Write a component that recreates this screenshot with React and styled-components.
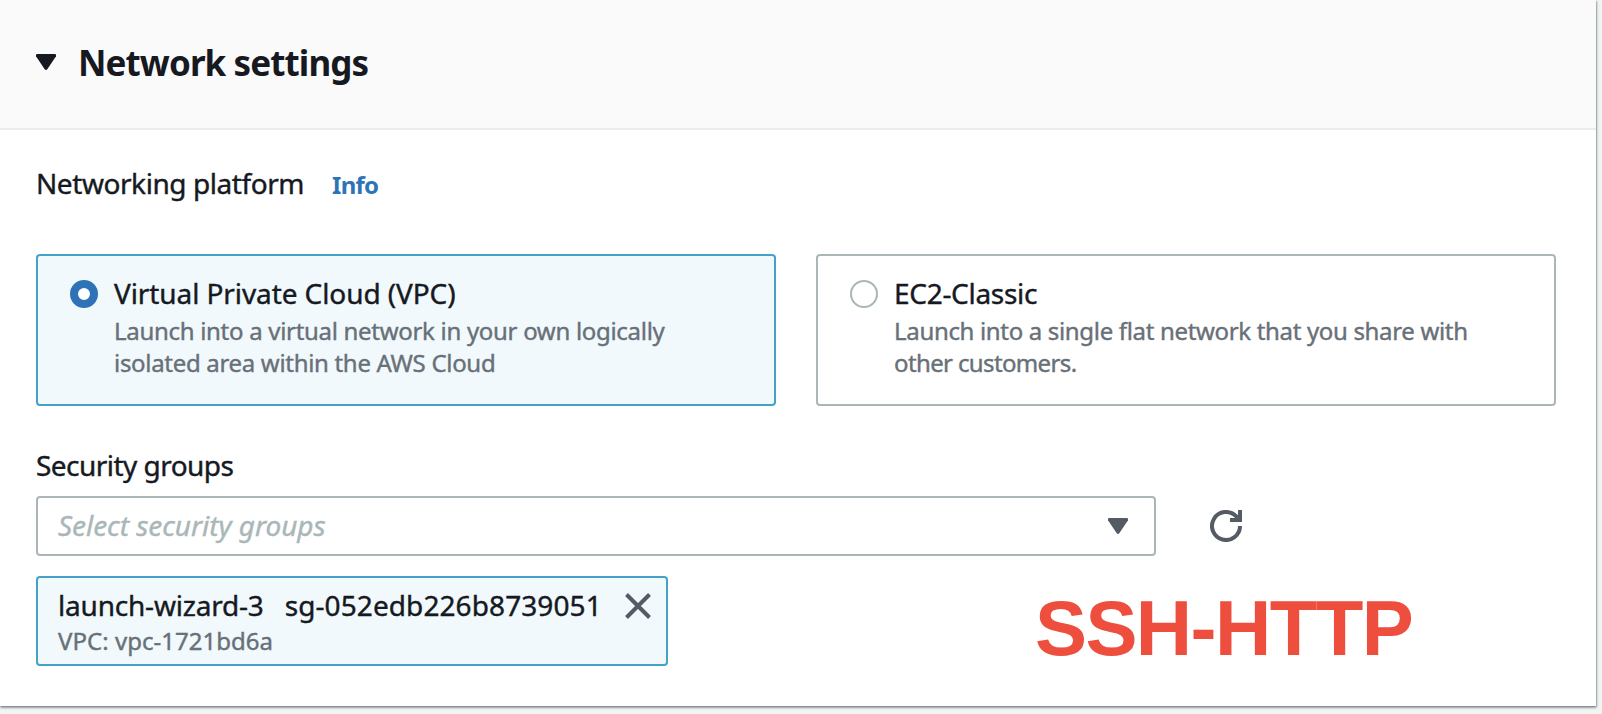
import React, { useState } from "react";
import styled, { createGlobalStyle } from "styled-components";

const color = {
  text: "#16191f",
  muted: "#687078",
  border: "#aab7b8",
  icon: "#545b64",
  accent: "#2e73b8",
  selectedBorder: "#44a1c8",
  selectedFill: "#f1f9fd",
  annotation: "#ee4e3e",
};

const GlobalStyle = createGlobalStyle`
  *, *::before, *::after { box-sizing: border-box; }
  body {
    margin: 0;
    background: #f2f3f3;
    color: ${color.text};
    font-family: "Noto Sans", "Open Sans", sans-serif;
    font-size: 28px;
    overflow: hidden;
  }
  h2, p { margin: 0; }
`;

const Page = styled.div`
  height: 714px;
`;

const Panel = styled.section`
  width: 1596px;
  height: 706px;
  background: #fff;
  box-shadow: 0 2px 2px 0 rgba(0, 28, 36, 0.3), 1px 1px 1px 0 rgba(0, 28, 36, 0.15),
    1px 1px 3px 0 rgba(0, 28, 36, 0.15);
`;

const Header = styled.header`
  display: flex;
  align-items: flex-start;
  gap: 22px;
  height: 130px;
  padding: 40px 36px 0;
  background: #fafafa;
  border-bottom: 2px solid #eaeded;
`;

const Caret = styled.svg`
  flex: none;
  width: 20px;
  height: 16px;
  margin-top: ${(p) => p.$top || 0}px;
  fill: ${(p) => p.$fill};
`;

const Title = styled.h2`
  font-size: 35px;
  line-height: 46px;
  font-weight: 700;
  letter-spacing: -0.9px;
`;

const Body = styled.div`
  padding: 31px 40px 0 36px;
`;

const Text = styled.span`
  letter-spacing: ${(p) => p.$track || 0}px;
  -webkit-text-stroke: 0.4px currentColor;
`;

const FieldHeading = styled.div`
  display: flex;
  align-items: baseline;
  gap: 28px;
  height: 44px;
  line-height: 44px;
`;

const InfoLink = styled.a`
  color: ${color.accent};
  font-size: 24px;
  font-weight: 700;
  letter-spacing: -0.8px;
`;

const Tiles = styled.div`
  display: grid;
  grid-template-columns: 740px 740px;
  gap: 40px;
  margin: 49px 0 37px;
`;

const Tile = styled.div`
  display: flex;
  gap: 16px;
  height: 152px;
  padding: 15px 32px 0;
  border: 2px solid ${(p) => (p.$selected ? color.selectedBorder : color.border)};
  border-radius: 4px;
  background: ${(p) => (p.$selected ? color.selectedFill : "#fff")};
  cursor: pointer;
`;

const Radio = styled.span`
  flex: none;
  width: 28px;
  height: 28px;
  margin-top: 9px;
  border-radius: 50%;
  background: #fff;
  border: ${(p) => (p.$selected ? `8px solid ${color.accent}` : `2px solid ${color.border}`)};
`;

const TileLabel = styled.div`
  line-height: 44px;
`;

const Description = styled.p`
  color: ${color.muted};
  font-size: 24px;
  line-height: 32px;
  white-space: nowrap;
`;

const SelectRow = styled.div`
  display: flex;
  align-items: center;
  gap: 54px;
  margin-top: 9px;
`;

const Select = styled.div`
  display: flex;
  align-items: center;
  justify-content: space-between;
  width: 1120px;
  height: 60px;
  padding: 0 26px 0 20px;
  border: 2px solid ${color.border};
  border-radius: 4px;
`;

const Placeholder = styled(Text)`
  color: ${color.border};
  font-style: italic;
  line-height: 40px;
  padding-bottom: 2px;
`;

const RefreshIcon = styled.svg`
  width: 32px;
  height: 32px;
  fill: none;
  stroke: ${color.icon};
  stroke-width: 4;
`;

const TokenRow = styled.div`
  display: flex;
  align-items: flex-start;
  margin-top: 20px;
`;

const Token = styled.div`
  display: flex;
  justify-content: space-between;
  width: 632px;
  height: 90px;
  padding: 7px 15px 0 20px;
  border: 2px solid ${color.selectedBorder};
  border-radius: 4px;
  background: ${color.selectedFill};
`;

const TokenLabel = styled.div`
  display: flex;
  gap: 21px;
  line-height: 40px;
`;

const CloseIcon = styled.svg`
  flex: none;
  width: 26px;
  height: 26px;
  margin-top: 8px;
  fill: none;
  stroke: ${color.icon};
  stroke-width: 4;
`;

const Annotation = styled.div`
  margin: 12px 0 0 367px;
  color: ${color.annotation};
  font-family: "Liberation Sans", Arial, sans-serif;
  font-size: 78px;
  font-weight: 700;
  font-kerning: none;
  line-height: 80px;
  letter-spacing: -1.6px;
`;

const DownCaret = (props) => (
  <Caret viewBox="0 0 20 16" {...props}>
    <path d="M1 0H19Q20 0 20 1V2.2L11.3 15.2Q10 16.8 8.7 15.2L0 2.2V1Q0 0 1 0Z" />
  </Caret>
);

const platforms = [
  {
    id: "vpc",
    label: ["Virtual Private Cloud (VPC)", -0.09],
    lines: [
      ["Launch into a virtual network in your own logically", -0.3],
      ["isolated area within the AWS Cloud", -0.31],
    ],
  },
  {
    id: "classic",
    label: ["EC2-Classic", -0.3],
    lines: [
      ["Launch into a single flat network that you share with", -0.33],
      ["other customers.", -0.63],
    ],
  },
];

export default function App() {
  const [platform, setPlatform] = useState("vpc");

  return (
    <Page>
      <GlobalStyle />
      <Panel>
        <Header>
          <DownCaret $top={14} $fill={color.text} />
          <Title>Network settings</Title>
        </Header>
        <Body>
          <FieldHeading>
            <Text $track={-0.43}>Networking platform</Text>
            <InfoLink>Info</InfoLink>
          </FieldHeading>
          <Tiles>
            {platforms.map(({ id, label, lines }) => (
              <Tile key={id} $selected={platform === id} onClick={() => setPlatform(id)}>
                <Radio $selected={platform === id} />
                <div>
                  <TileLabel>
                    <Text $track={label[1]}>{label[0]}</Text>
                  </TileLabel>
                  {lines.map(([line, track]) => (
                    <Description key={line}>
                      <Text $track={track}>{line}</Text>
                    </Description>
                  ))}
                </div>
              </Tile>
            ))}
          </Tiles>
          <FieldHeading>
            <Text $track={-0.54}>Security groups</Text>
          </FieldHeading>
          <SelectRow>
            <Select>
              <Placeholder $track={-0.05}>Select security groups</Placeholder>
              <DownCaret $fill={color.icon} />
            </Select>
            <RefreshIcon viewBox="0 0 32 32">
              <path d="M30 16A14 14 0 1 1 26 6.2L29 9.2" />
              <path d="M20 10H30V0" />
            </RefreshIcon>
          </SelectRow>
          <TokenRow>
            <Token>
              <div>
                <TokenLabel>
                  <Text $track={-0.2}>launch-wizard-3</Text>
                  <Text $track={0.09}>sg-052edb226b8739051</Text>
                </TokenLabel>
                <Description>
                  <Text $track={0.03}>VPC: vpc-1721bd6a</Text>
                </Description>
              </div>
              <CloseIcon viewBox="0 0 26 26">
                <path d="M1.5 1.5L24.5 24.5M24.5 1.5L1.5 24.5" />
              </CloseIcon>
            </Token>
            <Annotation>SSH-HTTP</Annotation>
          </TokenRow>
        </Body>
      </Panel>
    </Page>
  );
}
